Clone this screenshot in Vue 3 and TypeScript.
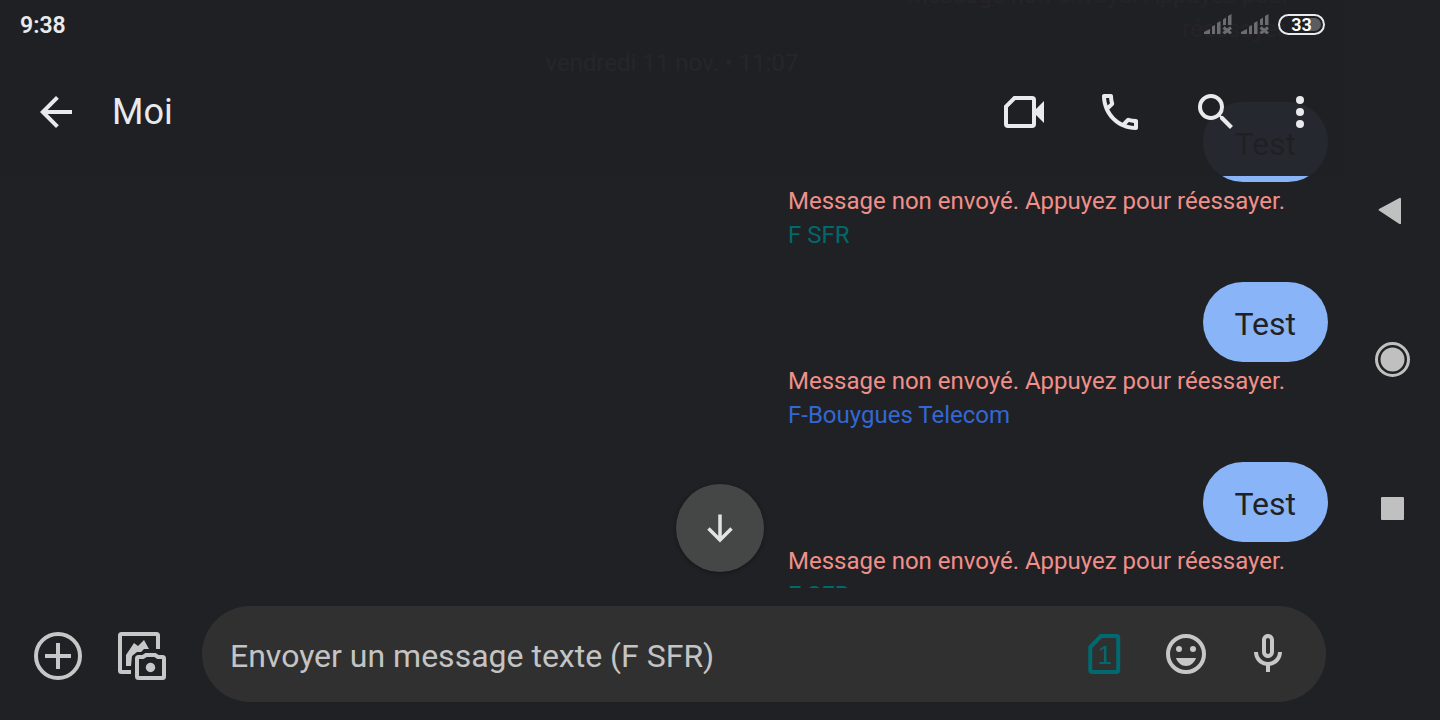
<script setup lang="ts">
import { ref } from 'vue'

interface Message {
  id: number
  text: string
  carrier: string
  sim: 'teal' | 'blue'
}

const messages: Message[] = [
  { id: 1, text: 'Test', carrier: 'F SFR', sim: 'teal' },
  { id: 2, text: 'Test', carrier: 'F-Bouygues Telecom', sim: 'blue' },
  { id: 3, text: 'Test', carrier: 'F SFR', sim: 'teal' },
]

const failure = 'Message non envoyé. Appuyez pour réessayer.'
const draft = ref('')
</script>

<template>
  <div class="screen">
    <main class="app">
      <header class="top">
        <div class="status">
          <time>9:38</time>
          <div class="indicators">
            <svg v-for="n in 2" :key="n" class="signal" viewBox="0 0 28 20" aria-hidden="true">
              <path d="M0 20v-2l6-3v5zM8 12.500l3-1.500v9H8zM13 9l3.500-2v13H13zM19 5.500l3-2V11h-3zM24 2l3.500-2v11H24z" />
              <path class="cross" d="M19.500 13.500l7.500 6M27 13.500l-7.500 6" />
            </svg>
            <span class="battery"><span>33</span></span>
          </div>
        </div>
        <div class="bar">
          <button class="icon" aria-label="Retour">
            <svg viewBox="0 0 24 24"><path d="M20 11H7.830l5.590-5.590L12 4l-8 8 8 8 1.410-1.410L7.830 13H20z" /></svg>
          </button>
          <h1>Moi</h1>
          <div class="actions">
            <button class="icon" aria-label="Appel vidéo">
              <svg viewBox="0 0 48 48">
                <path class="line" d="M14.500 10H32a2 2 0 0 1 2 2v24a2 2 0 0 1-2 2H8a2 2 0 0 1-2-2V18.500z" />
                <path d="M35 22l9-9v22l-9-9z" />
              </svg>
            </button>
            <button class="icon" aria-label="Appeler">
              <svg viewBox="0 0 24 24"><path d="M6.540 5c.06.89.21 1.760.45 2.590l-1.200 1.200c-.41-1.200-.67-2.470-.76-3.790h1.510m9.860 12.020c.85.24 1.720.39 2.600.45v1.490c-1.320-.09-2.590-.35-3.800-.75l1.200-1.190M7.500 3H4c-.55 0-1 .45-1 1 0 9.390 7.610 17 17 17 .55 0 1-.45 1-1v-3.490c0-.55-.45-1-1-1-1.240 0-2.450-.2-3.570-.57-.1-.04-.21-.05-.31-.05-.26 0-.51.1-.71.29l-2.200 2.200c-2.830-1.450-5.150-3.760-6.590-6.590l2.200-2.200c.28-.28.36-.67.25-1.020C8.700 6.450 8.500 5.250 8.500 4c0-.55-.45-1-1-1z" /></svg>
            </button>
            <button class="icon" aria-label="Rechercher">
              <svg viewBox="0 0 24 24"><path d="M15.500 14h-.79l-.28-.27A6.471 6.471 0 0 0 16 9.500 6.500 6.500 0 1 0 9.500 16c1.610 0 3.090-.59 4.230-1.570l.27.28v.79l5 4.990L20.490 19l-4.990-5zm-6 0C7.010 14 5 11.990 5 9.500S7.010 5 9.500 5 14 7.010 14 9.500 11.990 14 9.500 14z" /></svg>
            </button>
            <button class="icon more" aria-label="Plus d'options">
              <svg viewBox="0 0 48 48"><circle cx="24" cy="12" r="4" /><circle cx="24" cy="24" r="4" /><circle cx="24" cy="36" r="4" /></svg>
            </button>
          </div>
        </div>
      </header>

      <section class="thread">
        <p class="earlier">{{ failure }}</p>
        <p class="date">vendredi 11 nov. • 11:07</p>
        <article v-for="m in messages" :key="m.id" class="message">
          <p class="bubble">{{ m.text }}</p>
          <div class="meta">
            <p class="failure">{{ failure }}</p>
            <p :class="m.sim">{{ m.carrier }}</p>
          </div>
        </article>
      </section>

      <form class="composer" @submit.prevent>
        <div class="attachments">
          <button type="button" class="icon" aria-label="Ajouter">
            <svg viewBox="0 0 48 48"><circle class="line" cx="24" cy="24" r="22" /><path class="line" d="M24 11v26M11 24h26" /></svg>
          </button>
          <button type="button" class="icon" aria-label="Galerie et appareil photo">
            <svg viewBox="0 0 48 48">
              <path class="line" d="M40 17V3.500A1.500 1.500 0 0 0 38.500 2h-35A1.500 1.500 0 0 0 2 3.500v35A1.500 1.500 0 0 0 3.500 40H13" />
              <path d="M8 34V23l8-12 4 3 6-6 5 9h-5l-3 3h-4l-5 4-1 10z" />
              <path class="line" d="M20.500 46a1.500 1.500 0 0 1-1.500-1.500v-18a1.500 1.500 0 0 1 1.500-1.500H25l3-2h9l3 2h4.500a1.500 1.500 0 0 1 1.500 1.500v18a1.500 1.500 0 0 1-1.500 1.500z" />
              <circle cx="32.500" cy="35.500" r="4.700" />
            </svg>
          </button>
        </div>
        <div class="field">
          <input v-model="draft" type="text" placeholder="Envoyer un message texte (F SFR)" aria-label="Envoyer un message texte (F SFR)" />
          <button type="button" class="icon sim" aria-label="Carte SIM 1">
            <svg viewBox="0 0 48 48">
              <path class="line" d="M21 6H36.500a1.700 1.700 0 0 1 1.700 1.700v32.600A1.700 1.700 0 0 1 36.500 42H12a1.700 1.700 0 0 1-1.700-1.700V17z" />
              <text x="25" y="34" text-anchor="middle">1</text>
            </svg>
          </button>
          <button type="button" class="icon" aria-label="Émojis">
            <svg viewBox="0 0 48 48">
              <circle class="line" cx="24" cy="24" r="18" />
              <circle cx="17" cy="19" r="3" /><circle cx="31" cy="19" r="3" />
              <path d="M14 28h20c-1.600 4.600-5.400 8-10 8s-8.400-3.400-10-8z" />
            </svg>
          </button>
          <button type="button" class="icon" aria-label="Message vocal">
            <svg viewBox="0 0 24 24"><path d="M12 14c1.660 0 3-1.340 3-3V5c0-1.660-1.340-3-3-3S9 3.340 9 5v6c0 1.660 1.340 3 3 3zm-1-9c0-.55.45-1 1-1s1 .45 1 1v6c0 .55-.45 1-1 1s-1-.45-1-1V5zm6 6c0 2.760-2.240 5-5 5s-5-2.240-5-5H5c0 3.530 2.610 6.430 6 6.920V21h2v-3.080c3.390-.49 6-3.390 6-6.920h-2z" /></svg>
          </button>
        </div>
      </form>
    </main>

    <nav class="system">
      <button class="icon" aria-label="Précédent">
        <svg viewBox="0 0 48 48"><path d="M11 23.500q-1-.5 0-1.500L31 11.200q2-1 2 1v24q0 1.500-2 .5z" /></svg>
      </button>
      <button class="icon" aria-label="Accueil">
        <svg viewBox="0 0 48 48"><circle class="ring" cx="24.500" cy="23.500" r="16" /><circle cx="24.500" cy="23.500" r="12" /></svg>
      </button>
      <button class="icon" aria-label="Applications récentes">
        <svg viewBox="0 0 48 48"><rect x="13" y="12" width="23" height="23" rx="1" /></svg>
      </button>
    </nav>

    <button class="jump" aria-label="Aller en bas">
      <svg viewBox="0 0 48 48"><path d="M24 10.500v25M12.500 24.500l11.500 11.500 11.500-11.500" /></svg>
    </button>
  </div>
</template>

<style>
body {
  margin: 0;
  background: #202124;
}
</style>

<style scoped>
.screen {
  position: relative;
  display: flex;
  height: 100vh;
  overflow: hidden;
  background: #202124;
  color: #e8eaed;
  font-family: Roboto, "Noto Sans", sans-serif;
}

p,
h1 {
  margin: 0;
  font-weight: 400;
}

.app {
  position: relative;
  display: flex;
  flex: 1;
  flex-direction: column;
  min-width: 0;
}

.icon {
  display: block;
  flex: none;
  width: 48px;
  height: 48px;
  padding: 0;
  border: 0;
  background: none;
  color: inherit;
}

.icon svg {
  display: block;
  width: 48px;
  height: 48px;
  fill: currentColor;
}

.icon .line {
  fill: none;
  stroke: currentColor;
  stroke-width: 4;
}

.top {
  position: absolute;
  inset: 0 0 auto;
  z-index: 1;
  background: rgb(32 33 36 / 95%);
}

.status {
  display: flex;
  align-items: center;
  justify-content: space-between;
  height: 48px;
  padding: 0 19px 0 20px;
}

.status time {
  padding-top: 3px;
  font-size: 23px;
  font-weight: 600;
}

.indicators {
  display: flex;
  gap: 9px;
  align-items: center;
}

.signal {
  width: 28px;
  height: 20px;
  fill: #6c6c6e;
}

.cross {
  stroke: #6c6c6e;
  stroke-width: 3;
}

.battery {
  box-sizing: border-box;
  width: 47px;
  height: 21px;
  padding: 2px;
  border: 2px solid #e8eaed;
  border-radius: 11px;
  color: #fff;
  font-size: 18px;
  font-weight: 600;
  line-height: 14px;
  text-align: center;
}

.battery span {
  display: block;
  height: 13px;
  border-radius: 7px;
  background: linear-gradient(90deg, transparent 66%, #5c5c5e 66%);
}

.bar {
  display: flex;
  align-items: center;
  height: 128px;
  padding: 0 20px 0 32px;
}

.bar h1 {
  flex: 1;
  padding-left: 32px;
  font-size: 36px;
}

.actions {
  display: flex;
  gap: 48px;
}

.more {
  margin-left: -12px;
}

.thread {
  display: flex;
  flex: 1;
  flex-direction: column;
  align-items: flex-end;
  min-height: 0;
  overflow: hidden;
  font-size: 24px;
  line-height: 34px;
}

.earlier {
  width: 440px;
  margin-top: -22px;
  padding-right: 54px;
  color: #8e5854;
  text-align: right;
}

.date {
  align-self: stretch;
  margin-bottom: 22px;
  color: #7c8084;
  text-align: center;
}

.message {
  display: flex;
  flex: none;
  flex-direction: column;
  align-items: flex-end;
  margin: 0 16px 30px 0;
}

.bubble {
  margin-bottom: 2px;
  padding: 22px 32px 18px;
  border-radius: 40px;
  background: #8ab4f8;
  color: #202124;
  font-size: 32px;
  line-height: 40px;
}

.meta {
  width: 540px;
}

.failure {
  color: #f0908a;
}

.teal {
  color: #00696b;
}

.blue {
  color: #3367d6;
}

.composer {
  display: flex;
  flex: none;
  gap: 36px;
  align-items: center;
  padding: 18px 18px 18px 34px;
  background: #202124;
  color: #c7c7c7;
}

.attachments {
  display: flex;
  gap: 36px;
  padding-top: 4px;
}

.field {
  display: flex;
  flex: 1;
  gap: 34px;
  align-items: center;
  height: 96px;
  padding: 0 34px 0 28px;
  border-radius: 48px;
  box-sizing: border-box;
  background: #303030;
}

.field input {
  flex: 1;
  min-width: 0;
  padding: 4px 0 0;
  border: 0;
  outline: 0;
  background: none;
  color: #e8eaed;
  font: 32px/44px Roboto, "Noto Sans", sans-serif;
}

.field input::placeholder {
  color: #c4c4c4;
  opacity: 1;
}

.sim {
  color: #006a70;
}

.sim text {
  font-size: 26px;
  font-weight: 300;
}

.system {
  display: flex;
  flex: none;
  flex-direction: column;
  gap: 101px;
  align-items: center;
  justify-content: center;
  width: 96px;
  color: #c0c0c0;
}

.ring {
  fill: none;
  stroke: currentColor;
  stroke-width: 3;
}

.jump {
  position: absolute;
  bottom: 148px;
  left: 50%;
  display: grid;
  place-items: center;
  width: 88px;
  height: 88px;
  margin-left: -44px;
  padding: 0;
  border: 0;
  border-radius: 50%;
  background: #444746;
  box-shadow: 0 1px 4px rgb(0 0 0 / 40%);
}

.jump svg {
  width: 48px;
  height: 48px;
  fill: none;
  stroke: #e3e3e3;
  stroke-width: 3.500;
}
</style>
